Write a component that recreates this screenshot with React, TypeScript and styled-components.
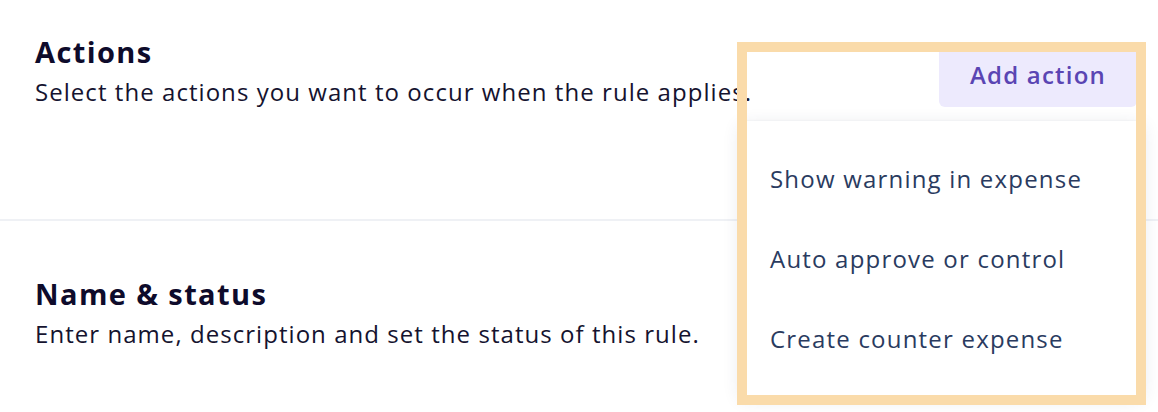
import React from 'react';
import styled, { createGlobalStyle } from 'styled-components';

const GlobalStyle = createGlobalStyle`
    body {
        margin: 0;
        background: #ffffff;
        font-family: "Open Sans", Lato, sans-serif;
        color: #100e2c;
    }
`;

const Page = styled.div`
    position: relative;
    width: 1158px;
    height: 412px;
    overflow: hidden;
`;

const Section = styled.section<{ $divider?: boolean }>`
    display: flex;
    justify-content: space-between;
    align-items: flex-start;
    box-sizing: border-box;
    height: ${p => (p.$divider ? '221px' : 'auto')};
    padding: ${p => (p.$divider ? '34px 21px 0 35px' : '55px 21px 0 35px')};
    border-bottom: ${p => (p.$divider ? '2px solid #eff1f5' : 'none')};
`;

const TextBlock = styled.div`
    display: flex;
    flex-direction: column;
    gap: 8px;
`;

const Heading = styled.h2`
    margin: 0;
    font-size: 29px;
    font-weight: 700;
    line-height: 36px;
    letter-spacing: 1.4px;
    color: #0e0b2b;
`;

const Description = styled.p`
    margin: 0;
    font-size: 24px;
    font-weight: 400;
    line-height: 28px;
    letter-spacing: 1.05px;
    color: #15132f;
`;

const ActionAnchor = styled.div`
    position: relative;
    margin-top: 8px;
`;

const AddButton = styled.button`
    width: 198px;
    height: 65px;
    border: none;
    border-radius: 6px;
    background: #edeafd;
    color: #5a45b3;
    font-family: "Open Sans", Lato, sans-serif;
    font-size: 24px;
    font-weight: 600;
    letter-spacing: 1.2px;
    cursor: pointer;
`;

const Menu = styled.ul`
    position: absolute;
    top: 79px;
    right: -6px;
    width: 403px;
    margin: 0;
    padding: 17px 0;
    list-style: none;
    background: #ffffff;
    border-radius: 6px;
    box-shadow: 0 4px 18px rgba(40, 50, 90, 0.12), 0 0 2px rgba(40, 50, 90, 0.08);
    z-index: 2;
`;

const MenuItem = styled.li`
    display: flex;
    align-items: center;
    height: 80px;
    padding-left: 30px;
    font-size: 24px;
    letter-spacing: 1.2px;
    color: #2a3b5f;
`;

const Highlight = styled.div`
    position: absolute;
    left: 737px;
    top: 42px;
    width: 409px;
    height: 363px;
    box-sizing: border-box;
    border: 10px solid #fadbaa;
    pointer-events: none;
    z-index: 3;
`;

const actions = ['Show warning in expense', 'Auto approve or control', 'Create counter expense'];

const App = () => {
    return (
        <Page>
            <GlobalStyle />
            <Section $divider>
                <TextBlock>
                    <Heading>Actions</Heading>
                    <Description>Select the actions you want to occur when the rule applies.</Description>
                </TextBlock>
                <ActionAnchor>
                    <AddButton>Add action</AddButton>
                    <Menu>
                        {actions.map(a => (
                            <MenuItem key={a}>{a}</MenuItem>
                        ))}
                    </Menu>
                </ActionAnchor>
            </Section>
            <Section>
                <TextBlock>
                    <Heading>Name &amp; status</Heading>
                    <Description>Enter name, description and set the status of this rule.</Description>
                </TextBlock>
            </Section>
            <Highlight />
        </Page>
    );
};

export default App;
